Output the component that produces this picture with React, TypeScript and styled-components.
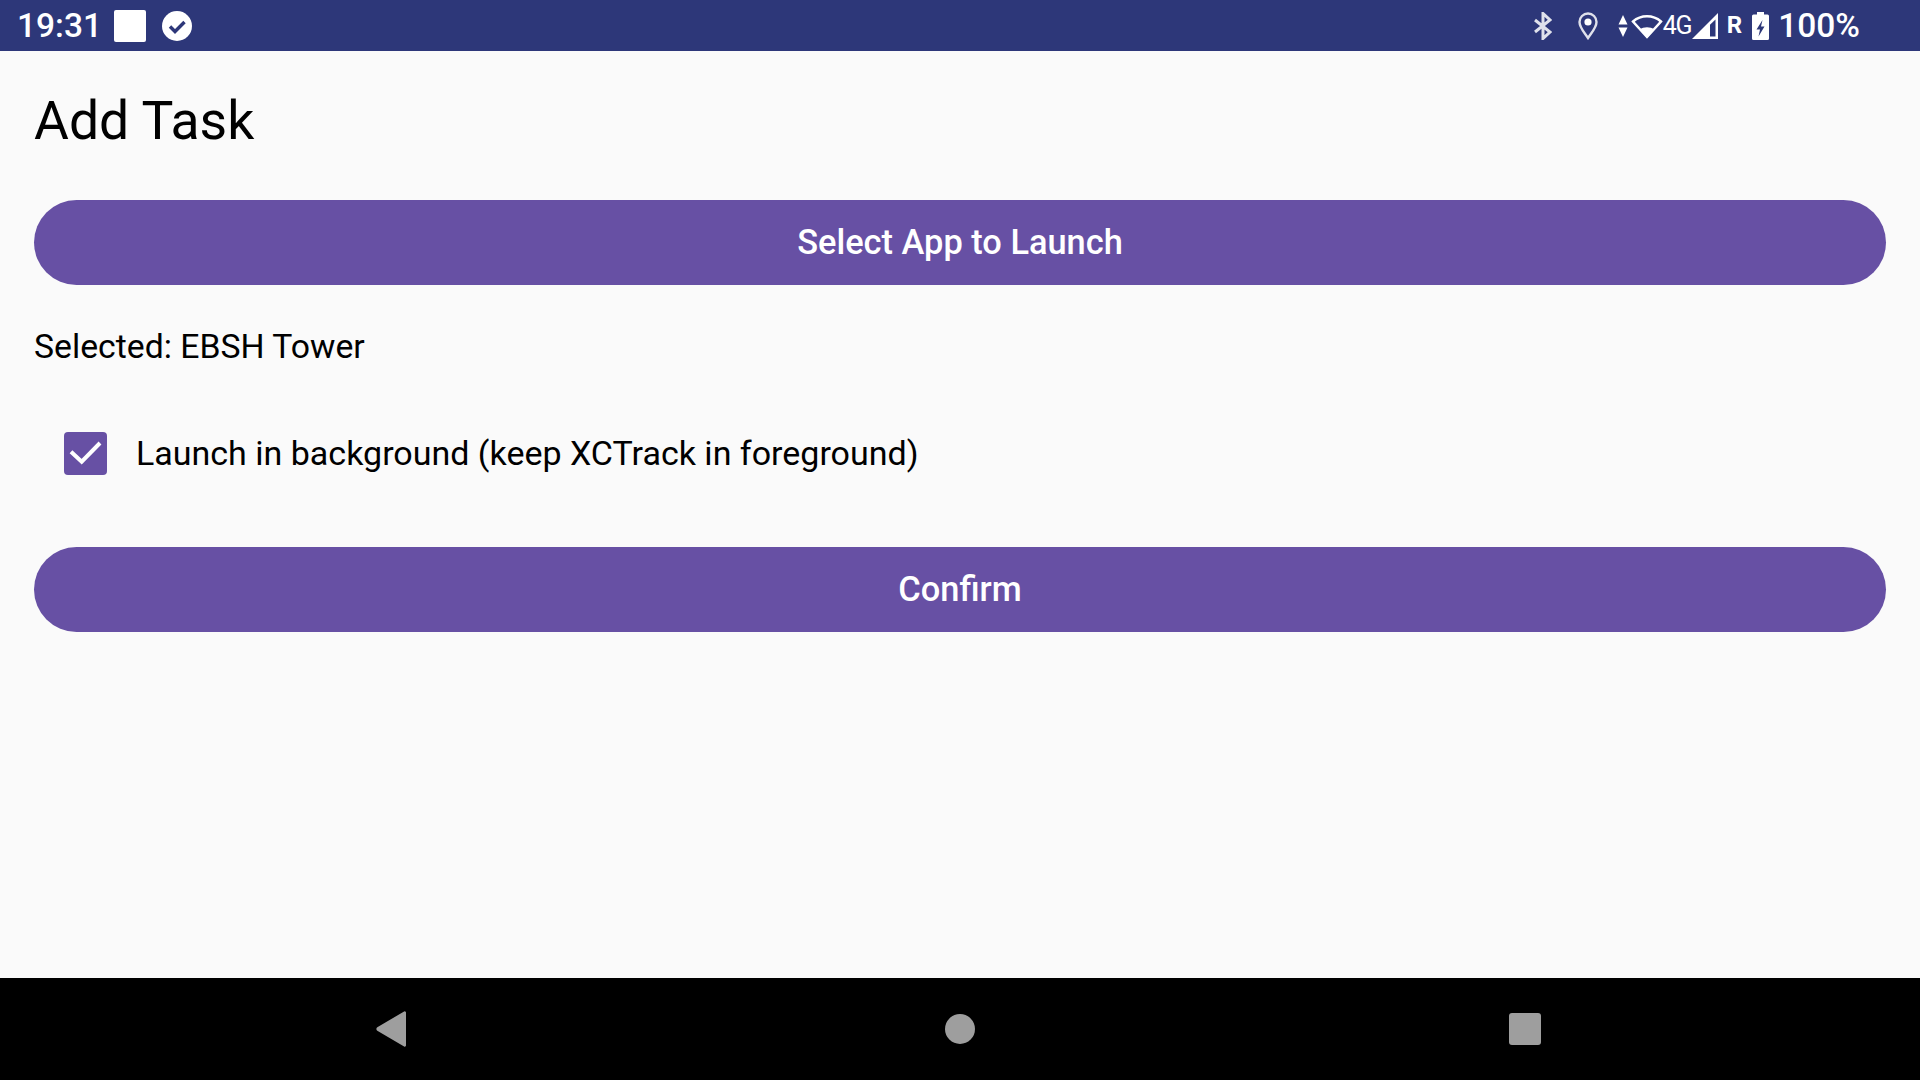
import React from 'react';

import styled, { createGlobalStyle } from 'styled-components';

const GlobalStyle = createGlobalStyle`
  html, body {
    margin: 0;
    padding: 0;
    background: #fafafa;
  }
  * {
    box-sizing: border-box;
  }
`;

const Screen = styled.div`
  width: 1920px;
  height: 1080px;
  display: flex;
  flex-direction: column;
  overflow: hidden;
  background-color: #fafafa;
  font-family: Roboto, 'Liberation Sans', sans-serif;
  color: #000;
`;

const StatusBar = styled.div`
  height: 51px;
  flex: none;
  display: flex;
  align-items: center;
  justify-content: space-between;
  padding: 0 60px 0 17px;
  background-color: #2d3779;
  color: #fff;
`;

const StatusGroup = styled.div`
  display: flex;
  align-items: center;
`;

const Clock = styled.span`
  font-size: 33.5px;
  font-weight: 500;
  line-height: 51px;
  margin-right: 12px;
`;

const Notification = styled.div`
  width: 32px;
  height: 32px;
  border-radius: 2px;
  background-color: #fff;
  margin-right: 15px;
`;

const StatusIcon = styled.svg<{ $gap?: number }>`
  display: block;
  flex: none;
  margin-right: ${(p) => p.$gap ?? 0}px;
`;

const NetworkLabel = styled.span`
  font-size: 25px;
  line-height: 51px;
  width: 29px;
  letter-spacing: -1.5px;
`;

const RoamingLabel = styled.span`
  font-size: 24px;
  font-weight: 700;
  line-height: 51px;
  margin: 0 10px 0 8px;
`;

const BatteryLabel = styled.span`
  font-size: 33.5px;
  font-weight: 500;
  line-height: 51px;
  margin-left: 9px;
`;

const Content = styled.main`
  flex: 1;
  display: flex;
  flex-direction: column;
  padding: 0 34px;
`;

const Title = styled.h1`
  margin: 37px 0 46px;
  font-size: 53.5px;
  font-weight: 400;
  line-height: 66px;
`;

const ActionButton = styled.button`
  display: block;
  width: 100%;
  height: 85px;
  flex: none;
  padding: 0 0 1px;
  border: none;
  border-radius: 43px;
  background-color: #6750a4;
  color: #fff;
  font-family: inherit;
  font-size: 34.4px;
  font-weight: 500;
`;

const SelectedText = styled.p`
  margin: 42px 0 0;
  font-size: 33.75px;
  line-height: 40px;
`;

const CheckRow = styled.label`
  display: flex;
  align-items: center;
  gap: 29px;
  margin: 65px 0 72px 30px;
  font-size: 34px;
  line-height: 40px;
`;

const CheckBox = styled.svg`
  display: block;
  flex: none;
`;

const CheckText = styled.span`
  padding-bottom: 2px;
`;

const NavBar = styled.nav`
  height: 102px;
  flex: none;
  display: flex;
  align-items: center;
  justify-content: space-between;
  padding: 0 379px 0 376px;
  background-color: #000;
`;

const NavIcon = styled.svg`
  display: block;
  fill: #9e9e9e;
`;

const App: React.FC = () => {
  return (
    <>
      <GlobalStyle />
      <Screen>
        <StatusBar>
          <StatusGroup>
            <Clock>19:31</Clock>
            <Notification />
            <StatusIcon width="32" height="32" viewBox="0 0 32 32">
              <circle cx="16" cy="16" r="15" fill="#fff" />
              <path d="M9 16.500l5 5 9.500-9.500" fill="none" stroke="#2d3779" strokeWidth="3.4" />
            </StatusIcon>
          </StatusGroup>
          <StatusGroup>
            <StatusIcon width="18" height="28" viewBox="0 0 18 28" $gap={26}>
              <path d="M1 8l15 12-7 6.500V1.500l7 6.500L1 20" fill="none" stroke="#fff" strokeOpacity="0.85" strokeWidth="3" />
            </StatusIcon>
            <StatusIcon width="20" height="28" viewBox="0 0 20 28" $gap={20}>
              <path d="M10 26C6 20 1.500 15.500 1.500 10a8.500 8.500 0 0 1 17 0C18.500 15.500 14 20 10 26z" fill="none" stroke="#fff" strokeOpacity="0.85" strokeWidth="2.4" />
              <circle cx="10" cy="10" r="3.600" fill="#fff" />
            </StatusIcon>
            <StatusIcon width="10" height="22" viewBox="0 0 10 22" $gap={3}>
              <path d="M5 0l4.500 9.500h-9zM5 22L.5 12.500h9z" fill="#fff" />
            </StatusIcon>
            <StatusIcon width="32" height="26" viewBox="0 0 32 26">
              <path d="M16 24L2 8.500C10 1.500 22 1.500 30 8.500z" fill="none" stroke="#fff" strokeWidth="2.4" />
              <path d="M16 25L8.500 16.500c4.500-3 10.500-3 15 0z" fill="#fff" />
            </StatusIcon>
            <NetworkLabel>4G</NetworkLabel>
            <StatusIcon width="27" height="26" viewBox="0 0 27 26">
              <path d="M0 26L26 0v26zM18 23.500h5.500V6.500L18 11.800z" fill="#fff" fillRule="evenodd" />
            </StatusIcon>
            <RoamingLabel>R</RoamingLabel>
            <StatusIcon width="17" height="28" viewBox="0 0 17 28">
              <path d="M5 0h7v2.500h3.500a1.500 1.500 0 0 1 1.500 1.500v22.500a1.500 1.500 0 0 1-1.500 1.500H1.500A1.500 1.500 0 0 1 0 26.500V4a1.500 1.500 0 0 1 1.500-1.500H5zM10.500 8L4.500 17.500h3.500l-1.500 7 6-10H9z" fill="#fff" fillRule="evenodd" />
            </StatusIcon>
            <BatteryLabel>100%</BatteryLabel>
          </StatusGroup>
        </StatusBar>
        <Content>
          <Title>Add Task</Title>
          <ActionButton>Select App to Launch</ActionButton>
          <SelectedText>Selected: EBSH Tower</SelectedText>
          <CheckRow>
            <CheckBox width="43" height="43" viewBox="0 0 43 43">
              <rect width="43" height="43" rx="4" fill="#6750a4" />
              <path d="M7 19.700l10.700 10L36 11" fill="none" stroke="#fff" strokeWidth="4" />
            </CheckBox>
            <CheckText>Launch in background (keep XCTrack in foreground)</CheckText>
          </CheckRow>
          <ActionButton>Confirm</ActionButton>
        </Content>
        <NavBar>
          <NavIcon width="35" height="36" viewBox="0 0 35 36">
            <path d="M30 1.500v33a1.200 1.200 0 0 1-1.900 1L1.300 19.800a2.200 2.200 0 0 1 0-3.600L28.100.500A1.200 1.200 0 0 1 30 1.500z" />
          </NavIcon>
          <NavIcon width="30" height="30" viewBox="0 0 30 30">
            <circle cx="15" cy="15" r="15" />
          </NavIcon>
          <NavIcon width="32" height="32" viewBox="0 0 32 32">
            <rect width="32" height="32" rx="3" />
          </NavIcon>
        </NavBar>
      </Screen>
    </>
  );
};

export default App;
